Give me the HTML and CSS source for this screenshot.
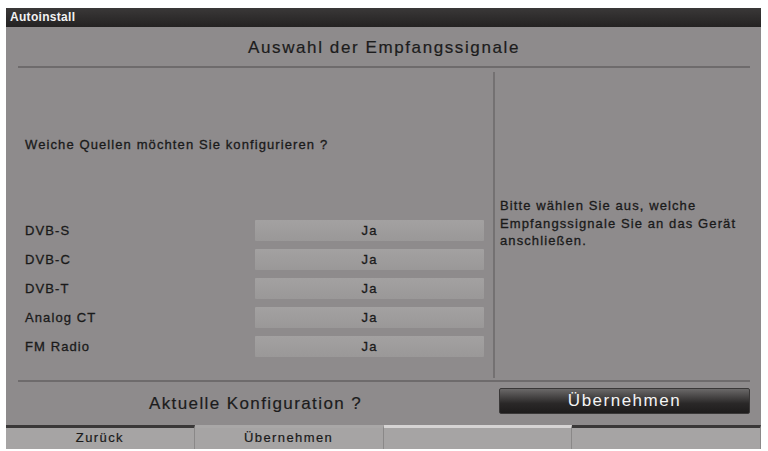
FILE: index.html
```html
<!DOCTYPE html>
<html>
<head>
<meta name="viewport" content="width=device-width, initial-scale=1">
<link rel="stylesheet" href="styles.css">
<title>Autoinstall</title>
</head>
<body>

<div class="screen">
    <div class="titlebar">Autoinstall</div>

    <div class="main">
        <div class="heading">Auswahl der Empfangssignale</div>

        <div class="panels">
            <div class="left">
                <div class="question">Weiche Quellen möchten Sie konfigurieren ?</div>
                <div class="sources">
                    <div class="row"><span class="label">DVB-S</span><span class="value">Ja</span></div>
                    <div class="row"><span class="label">DVB-C</span><span class="value">Ja</span></div>
                    <div class="row"><span class="label">DVB-T</span><span class="value">Ja</span></div>
                    <div class="row"><span class="label">Analog CT</span><span class="value">Ja</span></div>
                    <div class="row"><span class="label">FM Radio</span><span class="value">Ja</span></div>
                </div>
            </div>
            <div class="right">
                <p class="hint">Bitte wählen Sie aus, welche Empfangssignale Sie an das Gerät anschließen.</p>
            </div>
        </div>

        <div class="confirm">
            <div class="confirm_text">Aktuelle Konfiguration ?</div>
            <button class="apply">Übernehmen</button>
        </div>
    </div>

    <div class="tabs">
        <div class="tab tab_dark">Zurück</div>
        <div class="tab tab_mid">Übernehmen</div>
        <div class="tab tab_light"></div>
        <div class="tab tab_dark"></div>
    </div>
</div>

</body>
</html>
```

FILE: styles.css
```css
body {
    margin: 0;
    background-color: #ffffff;
    font-family: "Liberation Sans", Arial, sans-serif;
}

.screen {
    width: 755px;
    height: 441px;
    margin: 8px 0 0 6px;
    display: flex;
    flex-direction: column;
    background-color: #8e8b8c;
}

.titlebar {
    height: 19px;
    line-height: 19px;
    padding-left: 4px;
    background: linear-gradient(#3a3838, #242222);
    color: #f2f2f2;
    font-size: 12px;
    font-weight: bold;
    letter-spacing: 0.3px;
}

.main {
    flex: 1;
    display: flex;
    flex-direction: column;
    padding: 0 11px 0 12px;
}

.heading {
    height: 39px;
    line-height: 42px;
    text-align: center;
    font-size: 17px;
    letter-spacing: 1.6px;
    color: #1c1c1c;
    -webkit-text-stroke: 0.2px #1c1c1c;
    border-bottom: 2px solid #6e6b6c;
}

.panels {
    height: 312px;
    display: flex;
}

.left {
    width: 468px;
    padding: 69px 0 0 7px;
    border-right: 2px solid #747172;
    margin-top: 4px;
    margin-bottom: 2px;
}

.question,
.label,
.value,
.hint {
    font-size: 13px;
    letter-spacing: 1.1px;
    color: #1a1a1a;
    -webkit-text-stroke: 0.3px #1a1a1a;
}

.question {
    line-height: 16px;
    margin-top: -4px;
}

.sources {
    margin-top: 67px;
    display: flex;
    flex-direction: column;
    gap: 8px;
}

.row {
    display: flex;
    height: 21px;
    align-items: center;
}

.label {
    width: 230px;
}

.value {
    width: 229px;
    height: 21px;
    line-height: 21px;
    text-align: center;
    background: linear-gradient(#a3a1a1, #9a9898);
    border-radius: 1px;
}

.right {
    flex: 1;
    padding: 129px 8px 0 5px;
}

.hint {
    margin: 0;
    line-height: 17.5px;
}

.confirm {
    flex: 1;
    display: flex;
    align-items: center;
    border-top: 2px solid #6e6b6c;
}

.confirm_text {
    width: 475px;
    text-align: center;
    font-size: 17px;
    letter-spacing: 1.4px;
    color: #1c1c1c;
    -webkit-text-stroke: 0.2px #1c1c1c;
}

.apply {
    width: 251px;
    height: 26px;
    margin: 0 0 6px 6px;
    padding: 0;
    border: 1px solid #3a3838;
    border-radius: 2px;
    background: linear-gradient(#6a6868, #2a2828 60%, #1e1c1c);
    color: #f4f4f4;
    font-family: "Liberation Sans", Arial, sans-serif;
    font-size: 17px;
    letter-spacing: 1.5px;
}

.tabs {
    height: 24px;
    display: flex;
}

.tab {
    flex: 1;
    height: 21px;
    line-height: 20px;
    text-align: center;
    background-color: #a6a4a4;
    border-top: 3px solid #3a3838;
    border-right: 1px solid #8a8888;
    font-size: 13px;
    letter-spacing: 1.4px;
    color: #1a1a1a;
    -webkit-text-stroke: 0.2px #1a1a1a;
}

.tab_mid {
    border-top-color: #a9a7a7;
}

.tab_light {
    border-top-color: #d6d4d4;
}
```
